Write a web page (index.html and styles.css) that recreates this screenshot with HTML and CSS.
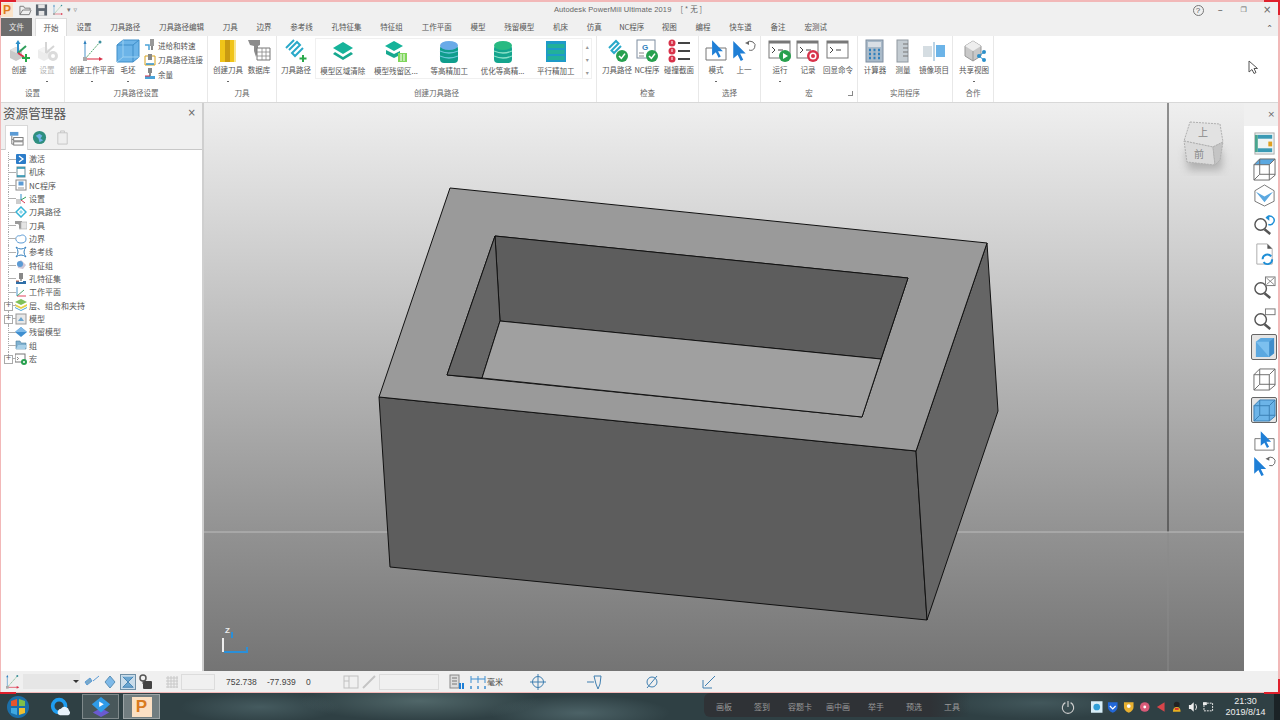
FILE: index.html
```html
<!DOCTYPE html>
<html lang="zh">
<head>
<meta charset="utf-8">
<title>Autodesk PowerMill Ultimate 2019</title>
<link rel="stylesheet" href="styles.css">
</head>
<body>
<svg class="defs" xmlns="http://www.w3.org/2000/svg">
  <symbol id="cube-s" viewBox="0 0 24 24"><path d="M3 11l6-3 6 3v8l-6 3-6-3z" fill="#c9c9c9"/><path d="M3 11l6 3 6-3-6-3z" fill="#e2e2e2"/></symbol>
  <symbol id="create" viewBox="0 0 24 24"><use href="#cube-s"/><path d="M11 14V3" stroke="#2c8fc9" stroke-width="2"/><path d="M11 1l-2.500 4h5z" fill="#2c8fc9"/><path d="M11 14l8-7" stroke="#2e9e5b" stroke-width="2"/><path d="M11 14l6 4" stroke="#d8324a" stroke-width="2"/><path d="M19 15v8M15 19h8" stroke="#29a84a" stroke-width="2"/></symbol>
  <symbol id="setup" viewBox="0 0 24 24"><g opacity=".35"><use href="#cube-s"/><path d="M11 14V3M11 14l8-7" stroke="#888" stroke-width="2"/><circle cx="18" cy="17" r="5" fill="#999"/><circle cx="18" cy="17" r="2" fill="#fff"/></g></symbol>
  <symbol id="wplane" viewBox="0 0 24 24"><path d="M5 3v17" stroke="#4b93c9" stroke-width="1"/><path d="M5 1L3.500 5h3z" fill="#2f80bd"/><path d="M5 20L20 3" stroke="#4da56b" stroke-width="1" stroke-dasharray="2 1"/><circle cx="20" cy="3" r="1.500" fill="#3d8f9c"/><path d="M5 20h15" stroke="#e0475c" stroke-width="1.200"/><path d="M23 20l-4-2v4z" fill="#d8324a"/><rect x="3" y="18" width="4" height="4" fill="#aaa"/></symbol>
  <symbol id="blank" viewBox="0 0 24 24"><path d="M1 6l6-5h16v17l-6 5H1z" fill="#6cb4e8" stroke="#3e8ec9"/><path d="M1 6h16v17M17 6l6-5" fill="none" stroke="#3e8ec9"/><path d="M7 1v17h16M7 18l-6 5" fill="none" stroke="#9ad0f2"/></symbol>
  <symbol id="feed" viewBox="0 0 12 12"><rect x="6" y="0" width="4" height="7" fill="#999"/><path d="M8 7v4" stroke="#888" stroke-width="2"/><path d="M1 6h4v5" stroke="#4ba3d8" stroke-width="1.500" fill="none"/></symbol>
  <symbol id="link" viewBox="0 0 12 12"><path d="M1 2h10v9H1z" fill="none" stroke="#d6a21e"/><rect x="4" y="0" width="4" height="6" fill="#888"/><path d="M2 10h8" stroke="#2c8fc9" stroke-width="1.500"/></symbol>
  <symbol id="stock" viewBox="0 0 12 12"><rect x="4" y="0" width="4" height="5" fill="#888"/><path d="M6 5v3" stroke="#666" stroke-width="1.500"/><path d="M1 8h10v3H1z" fill="#4ba3d8"/><path d="M1 8h5" stroke="#d8324a"/></symbol>
  <symbol id="tool" viewBox="0 0 24 24"><rect x="4" y="1" width="16" height="22" fill="#f0c419"/><rect x="9" y="1" width="5" height="22" fill="#c99a12"/><rect x="18" y="1" width="2" height="22" fill="#f9e58a"/></symbol>
  <symbol id="database" viewBox="0 0 24 24"><path d="M1 1h12v5l-2 1v5l-2 6-2-6V7L3 6z" fill="#8c8c8c"/><path d="M10 9h13v12H10z" fill="#fff" stroke="#777"/><path d="M10 13h13M10 17h13M15 9v12M19 9v12" stroke="#888" stroke-width=".8"/></symbol>
  <symbol id="path" viewBox="0 0 24 24"><path d="M5 11l8-8 3 3-8 8 3 3 8-8" fill="none" stroke="#29a9c9" stroke-width="2"/><path d="M2 9l8-8" stroke="#29a9c9" stroke-width="2"/><path d="M19 16v7M15.500 19.500h7" stroke="#29a84a" stroke-width="2"/></symbol>
  <symbol id="layers" viewBox="0 0 24 24"><path d="M12 2l10 6-10 6L2 8z" fill="#16b39a"/><path d="M4 12l8 5 8-5 2 2-10 6-10-6z" fill="#16a88f"/></symbol>
  <symbol id="layers2" viewBox="0 0 24 24"><path d="M10 1l9 5-9 5-9-5z" fill="#16b39a"/><path d="M2 10l8 4 6-3v4l-6 3-8-4z" fill="#16a88f"/><rect x="14" y="13" width="9" height="9" fill="#7fd65c"/><path d="M17 14v7M20 14v7" stroke="#fff"/></symbol>
  <symbol id="cyl" viewBox="0 0 24 24"><rect x="3" y="5" width="18" height="18" rx="4" fill="#0f9d8c"/><path d="M3 11q9 4 18 0M3 16q9 4 18 0" stroke="#6bc7d8" fill="none" stroke-width="1.300"/><ellipse cx="12" cy="5.500" rx="9" ry="4.500" fill="#6aaae8"/></symbol>
  <symbol id="cyl2" viewBox="0 0 24 24"><rect x="3" y="5" width="18" height="18" rx="4" fill="#14a58e"/><path d="M3 11q9 4 18 0M3 16q9 4 18 0" stroke="#8be0c8" fill="none" stroke-width="1.300"/><ellipse cx="12" cy="5.500" rx="9" ry="4.500" fill="#28ba82"/></symbol>
  <symbol id="parallel" viewBox="0 0 24 24"><rect x="2" y="1" width="20" height="21" fill="#1e9ac9"/><rect x="3.500" y="4" width="17" height="4" fill="#22b09a"/><rect x="3.500" y="10" width="17" height="4" fill="#22b09a"/><rect x="3.500" y="16" width="17" height="4" fill="#22b09a"/></symbol>
  <symbol id="okbadge" viewBox="0 0 10 10"><circle cx="5" cy="5" r="5" fill="#27a04e"/><path d="M2.500 5l2 2 3-4" fill="none" stroke="#fff" stroke-width="1.300"/></symbol>
  <symbol id="pathok" viewBox="0 0 24 24"><path d="M4 9l7-7 2.500 2.500-7 7L9 14l7-7" fill="none" stroke="#29a9c9" stroke-width="2"/><use href="#okbadge" x="11" y="11" width="12" height="12"/></symbol>
  <symbol id="ncok" viewBox="0 0 24 24"><rect x="2" y="1" width="18" height="18" fill="#fff" stroke="#7f8ea0"/><text x="7" y="11" class="svg-g">G</text><path d="M4 14h5M4 17h5" stroke="#888"/><use href="#okbadge" x="11" y="11" width="12" height="12"/></symbol>
  <symbol id="collide" viewBox="0 0 24 24"><circle cx="5" cy="4" r="3.500" fill="#d8324a"/><circle cx="5" cy="12" r="3.500" fill="#d8324a"/><circle cx="5" cy="20" r="3.500" fill="#d8324a"/><path d="M5 2v3M5 10v3M5 18v3" stroke="#fff"/><path d="M11 4h12M11 12h12M11 20h12" stroke="#444" stroke-width="2"/></symbol>
  <symbol id="arrow" viewBox="0 0 12 16"><path d="M1 0v14l3.500-3 2.500 5 2-1-2.500-5H11z" fill="#1f7fd6"/></symbol>
  <symbol id="mode" viewBox="0 0 24 24"><path d="M2 9h6M15 9h7v12H2V9" fill="none" stroke="#777"/><use href="#arrow" x="7" y="1" width="13" height="18"/></symbol>
  <symbol id="prev" viewBox="0 0 24 24"><use href="#arrow" x="0" y="1" width="15" height="22"/><path d="M15 4a4.500 4.500 0 1 1 2 7" fill="none" stroke="#666"/><path d="M13 4l4-2v4z" fill="#666"/></symbol>
  <symbol id="win" viewBox="0 0 24 24"><rect x="1" y="2" width="21" height="17" fill="#fff" stroke="#777"/><rect x="1" y="2" width="21" height="2.500" fill="#777"/><path d="M4 8l3 3-3 3M10 11h5" fill="none" stroke="#444"/></symbol>
  <symbol id="run" viewBox="0 0 24 24"><use href="#win"/><circle cx="17" cy="17" r="6" fill="#27a04e"/><path d="M15 14v6l5-3z" fill="#fff"/></symbol>
  <symbol id="rec" viewBox="0 0 24 24"><use href="#win"/><circle cx="17" cy="17" r="6" fill="#d8324a"/><circle cx="17" cy="17" r="3.500" fill="#fff"/><circle cx="17" cy="17" r="2" fill="#d8324a"/></symbol>
  <symbol id="calc" viewBox="0 0 24 24"><rect x="3" y="1" width="17" height="22" fill="#a9bac9" stroke="#7f8ea0"/><rect x="5" y="3" width="13" height="5" fill="#d9dfe5"/><path d="M6 11h2M10.500 11h2M15 11h2M6 15h2M10.500 15h2M15 15h2M6 19h2M10.500 19h2M15 19h2" stroke="#2f80bd" stroke-width="2.500"/></symbol>
  <symbol id="measure" viewBox="0 0 24 24"><rect x="6" y="1" width="11" height="22" fill="#c4ccd2" stroke="#8f98a0"/><path d="M12 5h5M12 9h5M12 13h5M12 17h5" stroke="#777"/></symbol>
  <symbol id="mirror" viewBox="0 0 24 24"><rect x="1" y="7" width="9" height="11" fill="#d5dde2"/><rect x="14" y="6" width="9" height="12" fill="#6cb4e8"/><path d="M12 3v19" stroke="#79a9cc"/></symbol>
  <symbol id="share" viewBox="0 0 24 24"><path d="M3 7l8-5 8 5v10l-8 5-8-5z" fill="#c8c8c8" stroke="#999"/><path d="M3 7l8 5 8-5-8-5z" fill="#eee"/><path d="M11 12v10" stroke="#999"/><path d="M17 17l5-4M17 17l5 4" stroke="#2c8fc9"/><circle cx="17" cy="17" r="2" fill="#2c8fc9"/><circle cx="22" cy="13" r="2" fill="#2c8fc9"/><circle cx="22" cy="21" r="2" fill="#2c8fc9"/></symbol>
  <symbol id="box3d" viewBox="0 0 24 24"><path d="M1 7l6-6h16v17l-6 5H1z M1 7h16v16 M17 7l6-6 M7 1v16h16 M7 17l-6 6" fill="none" stroke="#6b6b6b"/></symbol>
  <symbol id="zoomg" viewBox="0 0 24 24"><circle cx="8" cy="13" r="6" fill="#fff" stroke="#555" stroke-width="1.500"/><path d="M12 18l6 5" stroke="#555" stroke-width="2.500"/></symbol>
</svg>

<div class="app">
  <div class="titlebar">
    <span class="logo">P</span>
    <svg class="qa" viewBox="0 0 14 12"><path d="M1 11V2h4l1 2h6v2H4l-3 5h10l2-5" fill="none" stroke="#777"/></svg>
    <svg class="qa" viewBox="0 0 14 12"><path d="M1 0h12v12H1z" fill="#5d6670"/><rect x="3.500" y="0" width="7" height="4" fill="#e6e6e6"/><rect x="4" y="7" width="6" height="5" fill="#e6e6e6"/></svg>
    <svg class="qa" viewBox="0 0 24 24"><use href="#wplane"/></svg>
    <span class="qa-drop">▾</span>
    <span class="qa-drop">▿</span>
    <span class="title">Autodesk PowerMill Ultimate 2019<span class="doc">[ * 无 ]</span></span>
    <div class="winbtns">
      <span class="help">?</span>
      <span class="wb">–</span>
      <span class="wb wb-r">❐</span>
      <span class="wb">×</span>
    </div>
  </div>

  <div class="tabs">
    <span class="tab file">文件</span>
    <span class="tab active">开始</span>
    <span class="tab">设置</span>
    <span class="tab">刀具路径</span>
    <span class="tab">刀具路径编辑</span>
    <span class="tab">刀具</span>
    <span class="tab">边界</span>
    <span class="tab">参考线</span>
    <span class="tab">孔特征集</span>
    <span class="tab">特征组</span>
    <span class="tab">工作平面</span>
    <span class="tab">模型</span>
    <span class="tab">残留模型</span>
    <span class="tab">机床</span>
    <span class="tab">仿真</span>
    <span class="tab nc">NC程序</span>
    <span class="tab">视图</span>
    <span class="tab">编程</span>
    <span class="tab">快车道</span>
    <span class="tab">备注</span>
    <span class="tab">宏测试</span>
    <span class="collapse">⌃</span>
  </div>

  <div class="ribbon">
    <section class="group g1">
      <div class="items">
        <div class="item w28"><svg class="ic"><use href="#create"/></svg><span>创建</span></div>
        <div class="item w28 off"><svg class="ic"><use href="#setup"/></svg><span>设置</span><i class="more"></i></div>
      </div>
      <h4>设置</h4>
    </section>
    <section class="group g2">
      <div class="items">
        <div class="item w44"><svg class="ic"><use href="#wplane"/></svg><span>创建工作平面</span><i class="more"></i></div>
        <div class="item w28"><svg class="ic"><use href="#blank"/></svg><span>毛坯</span><i class="more"></i></div>
        <div class="minilist">
          <div class="mini"><svg><use href="#feed"/></svg>进给和转速</div>
          <div class="mini"><svg><use href="#link"/></svg>刀具路径连接</div>
          <div class="mini"><svg><use href="#stock"/></svg>余量</div>
        </div>
      </div>
      <h4>刀具路径设置</h4>
    </section>
    <section class="group g3">
      <div class="items">
        <div class="item w32"><svg class="ic"><use href="#tool"/></svg><span>创建刀具</span><i class="more"></i></div>
        <div class="item w28"><svg class="ic"><use href="#database"/></svg><span>数据库</span></div>
      </div>
      <h4>刀具</h4>
    </section>
    <section class="group g4">
      <div class="items">
        <div class="item w34"><svg class="ic"><use href="#path"/></svg><span>刀具路径</span></div>
        <div class="gallery">
          <div class="item wg"><svg class="ic"><use href="#layers"/></svg><span>模型区域清除</span></div>
          <div class="item wg"><svg class="ic"><use href="#layers2"/></svg><span>模型残留区...</span></div>
          <div class="item wg"><svg class="ic"><use href="#cyl"/></svg><span>等高精加工</span></div>
          <div class="item wg"><svg class="ic"><use href="#cyl2"/></svg><span>优化等高精...</span></div>
          <div class="item wg"><svg class="ic"><use href="#parallel"/></svg><span>平行精加工</span></div>
          <div class="gscroll"><b>▴</b><b>▾</b><b>▾</b></div>
        </div>
      </div>
      <h4>创建刀具路径</h4>
    </section>
    <section class="group g5">
      <div class="items">
        <div class="item w30"><svg class="ic"><use href="#pathok"/></svg><span>刀具路径</span></div>
        <div class="item w30"><svg class="ic"><use href="#ncok"/></svg><span>NC程序</span></div>
        <div class="item w34"><svg class="ic"><use href="#collide"/></svg><span>碰撞截面</span></div>
      </div>
      <h4>检查</h4>
    </section>
    <section class="group g6">
      <div class="items">
        <div class="item w30"><svg class="ic"><use href="#mode"/></svg><span>模式</span><i class="more"></i></div>
        <div class="item w26"><svg class="ic"><use href="#prev"/></svg><span>上一</span></div>
      </div>
      <h4>选择</h4>
    </section>
    <section class="group g7">
      <div class="items">
        <div class="item w30"><svg class="ic"><use href="#run"/></svg><span>运行</span><i class="more"></i></div>
        <div class="item w26"><svg class="ic"><use href="#rec"/></svg><span>记录</span></div>
        <div class="item w34"><svg class="ic"><use href="#win"/></svg><span>回显命令</span></div>
      </div>
      <h4>宏<i class="launcher"></i></h4>
    </section>
    <section class="group g8">
      <div class="items">
        <div class="item w28"><svg class="ic"><use href="#calc"/></svg><span>计算器</span></div>
        <div class="item w28"><svg class="ic"><use href="#measure"/></svg><span>测量</span></div>
        <div class="item w34"><svg class="ic"><use href="#mirror"/></svg><span>镜像项目</span></div>
      </div>
      <h4>实用程序</h4>
    </section>
    <section class="group g9">
      <div class="items">
        <div class="item w36"><svg class="ic"><use href="#share"/></svg><span>共享视图</span><i class="more"></i></div>
      </div>
      <h4>合作</h4>
    </section>
    <svg class="cursor" viewBox="0 0 10 14"><path d="M1 1v11l3-2.500 2 4 2-1-2-4h3.500z" fill="#fff" stroke="#555"/></svg>
  </div>

  <div class="main">
    <aside class="explorer">
      <div class="ex-head"><span>资源管理器</span><i>×</i></div>
      <div class="ex-tabs">
        <span class="ex-tab active"><svg viewBox="0 0 16 16"><rect x="1" y="1" width="9" height="4" fill="#5b9bd5"/><path d="M3 5v9h2M3 9h2" fill="none" stroke="#777"/><rect x="5" y="7" width="10" height="3.500" fill="#fff" stroke="#777"/><rect x="5" y="11.500" width="10" height="3.500" fill="#fff" stroke="#777"/></svg></span>
        <span class="ex-tab"><svg viewBox="0 0 16 16"><circle cx="8" cy="8" r="7" fill="#2f8f7f"/><path d="M4 6l4-2 3 2-2 3 3 2-4 2-1-4z" fill="#6fb2e8"/></svg></span>
        <span class="ex-tab"><svg viewBox="0 0 16 16"><path d="M3 3h10v12H3zM6 3V1h4v2" fill="#eee" stroke="#c4c4c4"/></svg></span>
      </div>
      <ul class="tree">
        <li><svg viewBox="0 0 12 12"><rect x="1" y="1" width="10" height="10" rx="1" fill="#2b7cc9"/><path d="M4 3l4 3-4 3" fill="none" stroke="#fff" stroke-width="1.300"/></svg>激活</li>
        <li><svg viewBox="0 0 12 12"><rect x="2" y="1" width="8" height="10" fill="#fff" stroke="#6f8f9a"/><path d="M2 2h8M2 10h8" stroke="#1f8faf" stroke-width="1.500"/></svg>机床</li>
        <li><svg viewBox="0 0 12 12"><rect x="1" y="1" width="10" height="10" fill="#fff" stroke="#888"/><rect x="3.500" y="2.500" width="5" height="4" fill="#5b9bd5"/><path d="M3 9h6" stroke="#999"/></svg>NC程序</li>
        <li><svg viewBox="0 0 12 12"><rect x="1" y="6" width="5" height="5" fill="#ccc"/><path d="M6 7V1" stroke="#2c8fc9"/><path d="M6 7l5-3" stroke="#2e9e5b"/><path d="M6 7l4 3" stroke="#d8324a"/></svg>设置</li>
        <li><svg viewBox="0 0 12 12"><path d="M6 1l5 5-5 5-5-5z" fill="none" stroke="#36b4d6" stroke-width="1.500"/><path d="M6 4l2 2-2 2-2-2z" fill="#8ed8ec"/></svg>刀具路径</li>
        <li><svg viewBox="0 0 12 12"><path d="M0 2h7v3l-1 1v3l-1 2-1-2V6L3 5H0z" fill="#9a9a9a"/><rect x="6" y="3" width="6" height="7" fill="#e4e4e4" stroke="#aaa" stroke-width=".6"/></svg>刀具</li>
        <li><svg viewBox="0 0 12 12"><path d="M1 7c-1-3 2-5 4-4 2-2 6-1 6 3 0 3-2 4-5 4s-4-1-5-3z" fill="#fff" stroke="#5b9bd5"/></svg>边界</li>
        <li><svg viewBox="0 0 12 12"><path d="M1 1q5 4 10 0-4 5 0 10-5-4-10 0 4-5 0-10z" fill="none" stroke="#3a83bf"/></svg>参考线</li>
        <li><svg viewBox="0 0 12 12"><path d="M2 4l4-3 5 5-3 4-5-1z" fill="#d0c6d6"/><circle cx="5" cy="5" r="3" fill="#5b9bd5"/></svg>特征组</li>
        <li><svg viewBox="0 0 12 12"><rect x="4" y="0" width="4" height="6" fill="#888"/><path d="M6 6v2" stroke="#555"/><path d="M1 8h3v1h4V8h3v3H1z" fill="#2f6fa8"/><path d="M1 8h3" stroke="#c64"/></svg>孔特征集</li>
        <li><svg viewBox="0 0 12 12"><path d="M2 1v9" stroke="#4b93c9"/><path d="M2 10h9" stroke="#e0475c"/><path d="M2 10l7-6" stroke="#4da56b"/></svg>工作平面</li>
        <li class="exp"><svg viewBox="0 0 12 12"><path d="M6 0l6 3-6 3-6-3z" fill="#7fc05a"/><path d="M0 5l6 3 6-3v2L6 10 0 7z" fill="#e6d04a"/><path d="M0 8l6 3 6-3v1l-6 3-6-3z" fill="#4aa8d8"/></svg>层、组合和夹持</li>
        <li class="exp"><svg viewBox="0 0 12 12"><rect x="1" y="1" width="10" height="10" fill="#e8e8e8" stroke="#999"/><path d="M3 8l3-4 3 4z" fill="#6aa5d0"/></svg>模型</li>
        <li><svg viewBox="0 0 12 12"><path d="M6 1l6 5-6 5-6-5z" fill="#3f8fd0"/><path d="M6 1l6 5H0z" fill="#7db9e8"/></svg>残留模型</li>
        <li><svg viewBox="0 0 12 12"><path d="M1 2h4l1 2h5v6H1z" fill="#7fb0cf" stroke="#4a7f9f" stroke-width=".6"/><path d="M1 10l2-4h9l-2 4z" fill="#a8d0e8"/></svg>组</li>
        <li class="exp"><svg viewBox="0 0 12 12"><rect x="0" y="1" width="10" height="8" fill="#fff" stroke="#777"/><path d="M2 4l1.500 1.500L2 7" fill="none" stroke="#555" stroke-width=".7"/><circle cx="9" cy="9" r="3" fill="#27a04e"/><circle cx="9" cy="9" r="1" fill="#fff"/></svg>宏</li>
      </ul>
    </aside>

    <div class="viewport">
      <svg class="scene" viewBox="204 103 1040 568" xmlns="http://www.w3.org/2000/svg">
        <defs>
          <filter id="soft" x="-30%" y="-30%" width="160%" height="160%"><feGaussianBlur stdDeviation="4"/></filter>
        </defs>
        <path d="M1168 103v429" stroke="#2e2e2e" stroke-width="1"/>
        <path d="M1168 532v139" stroke="#8a8a8a" stroke-width="1"/>
        <path d="M204 532h1040" stroke="#bdbdbd" stroke-width="1"/>
        <g stroke="#111" stroke-width="1" stroke-linejoin="round">
          <polygon points="379,397 916,451 927,620 390,567" fill="#5d5d5d"/>
          <polygon points="916,451 987,243 998,411 927,620" fill="#656565"/>
          <path d="M450,188 L987,243 L916,451 L379,397 Z M495,236 L447,375 L862,417 L908,278 Z" fill="#9a9a9a" fill-rule="evenodd"/>
          <polygon points="495,236 908,278 881,359 500,321" fill="#5d5d5d"/>
          <polygon points="495,236 500,321 482,378 447,375" fill="#666"/>
          <polygon points="500,321 881,359 862,417 482,378" fill="#a0a0a0"/>
        </g>
        <g class="triad">
          <path d="M232 632v6" stroke="#2a8fd8" stroke-width="2"/>
          <path d="M223 652v-14" stroke="#eee" stroke-width="2"/>
          <path d="M224 652h23v-5" stroke="#2a8fd8" stroke-width="2" fill="none"/>
          <text x="225" y="633" class="axis">Z</text>
        </g>
        <g class="cube">
          <polygon points="1186,150 1222,150 1222,170 1188,170" fill="#8f8f8f" opacity=".6" filter="url(#soft)"/>
          <polygon points="1190,122 1220,124 1223,142 1213,147 1184,141" fill="#e2e2e2" stroke="#b0b0b0" stroke-dasharray="2 1"/>
          <polygon points="1184,141 1213,147 1215,165 1187,162" fill="#dadada" stroke="#b0b0b0" stroke-dasharray="2 1"/>
          <polygon points="1213,147 1223,142 1220,160 1215,165" fill="#c4c4c4" stroke="#b0b0b0" stroke-dasharray="2 1"/>
          <text x="1203" y="136" class="cube-t">上</text>
          <text x="1199" y="158" class="cube-t">前</text>
        </g>
      </svg>
    </div>

    <aside class="viewbar">
      <div class="vb-head">×</div>
      <div class="vb-list">
        <span class="vb h26"><svg viewBox="0 0 24 24"><rect x="2" y="1" width="20" height="22" fill="#eef4f4" stroke="#aaa"/><rect x="5" y="3" width="15" height="4" fill="#3a9ab5"/><rect x="5" y="17" width="15" height="4" fill="#3a9ab5"/><rect x="2" y="3" width="3" height="18" fill="#4aa58f"/><rect x="16" y="10" width="4" height="5" fill="#e0a020"/></svg></span>
        <span class="vb h26"><svg viewBox="0 0 24 24"><path d="M1 7l6-6h16L17 7z" fill="#5ba8e0"/><use href="#box3d"/></svg></span>
        <span class="vb h27"><svg viewBox="0 0 24 24"><path d="M12 1l10 6v11l-10 5-10-5V7z" fill="#fff" stroke="#777"/><path d="M3 8l9 5 9-5-9 11z" fill="#5ba8e0"/></svg></span>
        <span class="vb h29"><svg viewBox="0 0 24 24"><use href="#zoomg"/><path d="M14 6a4.500 4.500 0 1 1 2 7" fill="none" stroke="#1f8fd6" stroke-width="1.500"/><path d="M13 6l4-3v6z" fill="#1f8fd6"/></svg></span>
        <span class="vb h32"><svg viewBox="0 0 24 24"><path d="M4 1h11l5 5v16H4z" fill="#fff" stroke="#aaa"/><path d="M15 1l5 5h-5z" fill="#555"/><path d="M10 17a5 5 0 0 1 9-3M20 17a5 5 0 0 1-9 3" fill="none" stroke="#1f8fd6" stroke-width="2"/></svg></span>
        <span class="vb h34"><svg viewBox="0 0 24 24"><use href="#zoomg"/><rect x="13" y="1" width="10" height="9" fill="#fff" stroke="#777"/><path d="M14 2l8 7M22 2l-8 7" stroke="#888"/></svg></span>
        <span class="vb h28"><svg viewBox="0 0 24 24"><use href="#zoomg"/><rect x="13" y="2" width="10" height="6" fill="#fff" stroke="#777"/></svg></span>
        <span class="vb on on-a"><svg viewBox="0 0 24 24"><path d="M3 6l5-4h14v16l-5 4H3z" fill="#5ba8e0"/><path d="M3 6h14v16z" fill="#7cc0ef"/><path d="M17 6l5-4v16l-5 4z" fill="#3f8ecb"/></svg></span>
        <span class="vb h34"><svg viewBox="0 0 24 24"><use href="#box3d"/></svg></span>
        <span class="vb on on-b"><svg viewBox="0 0 24 24"><path d="M1 7l6-6h16v17l-6 5H1z" fill="#6cb4e8"/><path d="M1 7l6-6h16v17l-6 5H1z M1 7h16v16 M17 7l6-6 M7 1v16h16 M7 17l-6 6" fill="none" stroke="#3a7fb5"/></svg></span>
        <span class="vb h34"><svg viewBox="0 0 24 24"><use href="#mode"/></svg></span>
        <span class="vb h16"><svg viewBox="0 0 24 24"><use href="#prev"/></svg></span>
      </div>
    </aside>
  </div>

  <footer class="status">
    <svg class="st" viewBox="0 0 24 24"><use href="#wplane"/></svg>
    <span class="combo"><i></i></span>
    <svg class="st" viewBox="0 0 16 16"><path d="M1 8l5-4 2 3-5 4zM15 2L9 7" fill="#7aa9c9" stroke="#5b9bd5"/></svg>
    <svg class="st" viewBox="0 0 16 16"><path d="M8 2l5 6-5 6-5-6z" fill="#7db9e8" stroke="#5b8fb5"/></svg>
    <span class="st-on"><svg viewBox="0 0 16 16"><path d="M2 2l6 6 6-6M8 8l-6 6h12z" fill="#6aa5d0" stroke="#3f7fb0"/></svg></span>
    <svg class="st" viewBox="0 0 16 16"><rect x="5" y="7" width="9" height="8" rx="1" fill="#444"/><circle cx="5" cy="4" r="3" fill="none" stroke="#555" stroke-width="1.500"/><path d="M5 7v3" stroke="#555"/></svg>
    <svg class="st grid" viewBox="0 0 12 12"><path d="M0 2h12M0 5h12M0 8h12M0 11h12M2 0v12M5 0v12M8 0v12M11 0v12" stroke="#c8c8c8"/></svg>
    <span class="field f1"></span>
    <span class="num n1">752.738</span>
    <span class="num n2">-77.939</span>
    <span class="num n3">0</span>
    <svg class="st dim d1" viewBox="0 0 16 16"><rect x="1" y="2" width="14" height="12" fill="none" stroke="#c0c0c0"/><path d="M6 2v12M1 7h5" stroke="#c0c0c0"/></svg>
    <svg class="st dim" viewBox="0 0 16 16"><path d="M2 14L14 2" stroke="#c4c4c4" stroke-width="2"/></svg>
    <span class="field f2"></span>
    <svg class="st s1" viewBox="0 0 16 16"><rect x="2" y="1" width="9" height="13" fill="#ddd" stroke="#888"/><path d="M4 4h5M4 7h5M4 10h5" stroke="#777"/><path d="M12 9v6M15 9v6" stroke="#1f7fd6" stroke-width="2"/></svg>
    <svg class="st s2" viewBox="0 0 16 16"><path d="M1 2v7M8 2v7M15 2v7M1 5h14" stroke="#3f8fd0" fill="none"/><path d="M1 12v3M8 12v3M15 12v3" stroke="#3f8fd0" stroke-width="1.500"/></svg>
    <span class="unit">毫米</span>
    <svg class="st s3" viewBox="0 0 16 16"><circle cx="8" cy="8" r="5.500" fill="none" stroke="#3f7fb0"/><path d="M8 0v16M0 8h16" stroke="#3f7fb0"/></svg>
    <svg class="st s4" viewBox="0 0 16 16"><path d="M7 2h7l-1 8-2 5-2-5zM0 8h7" fill="none" stroke="#3f7fb0"/></svg>
    <svg class="st s4" viewBox="0 0 16 16"><circle cx="8" cy="8" r="5" fill="none" stroke="#3f7fb0"/><path d="M3 14L13 2" stroke="#3f7fb0"/></svg>
    <svg class="st s4" viewBox="0 0 16 16"><path d="M14 2L4 12M2 6v8h9" fill="none" stroke="#3f7fb0"/></svg>
  </footer>
  <i class="corner tl"></i>
  <i class="corner tr"></i>
  <i class="corner bl"></i>
  <i class="corner br"></i>
</div>

<nav class="taskbar">
  <span class="orb"><svg viewBox="0 0 24 24"><circle cx="12" cy="12" r="11" fill="#1c6fa8"/><path d="M5 6l6-2v7H5z" fill="#e8552d"/><path d="M13 4l6 2v5h-6z" fill="#7fc04a"/><path d="M5 13h6v7l-6-2z" fill="#3fa8e0"/><path d="M13 13h6v5l-6 2z" fill="#f0c030"/></svg></span>
  <span class="tk q"><svg viewBox="0 0 24 24"><circle cx="11" cy="11" r="7" fill="none" stroke="#1f9df0" stroke-width="4"/><path d="M10 20a4 4 0 0 1 3-6 5 5 0 0 1 9 2 3 3 0 0 1-1 5H12z" fill="#e8f2fa"/></svg></span>
  <span class="tk app"><svg viewBox="0 0 24 24"><path d="M12 13l9 5-9 5-9-5z" fill="#6a5ad0"/><path d="M12 1l10 8-10 9L2 9z" fill="#2f9be8"/><path d="M10 6l5 3-5 3z" fill="#fff"/></svg></span>
  <span class="tk app light"><span class="pm">P</span></span>
  <div class="dock">
    <span>画板</span><span>签到</span><span>容题卡</span><span>画中画</span><span>举手</span><span>预选</span><span>工具</span>
  </div>
  <svg class="power" viewBox="0 0 16 16"><path d="M5 3a6.500 6.500 0 1 0 6 0M8 1v7" fill="none" stroke="#cfcfcf" stroke-width="1.300"/></svg>
  <div class="tray">
    <svg viewBox="0 0 12 12"><rect width="12" height="12" fill="#d8eef8"/><circle cx="6" cy="6" r="3.500" fill="#2f9fd8"/></svg>
    <svg viewBox="0 0 12 12"><path d="M1 1h10v5q0 4-5 6-5-2-5-6z" fill="#2368d8"/><path d="M3 5l3 3 3-3" fill="none" stroke="#fff" stroke-width="1.300"/></svg>
    <svg viewBox="0 0 12 12"><path d="M1 1h10v5q0 4-5 6-5-2-5-6z" fill="#e8b030"/><circle cx="6" cy="5" r="2" fill="#fff"/></svg>
    <svg viewBox="0 0 12 12"><circle cx="6" cy="6" r="5" fill="#d85a78"/><circle cx="6" cy="6" r="1.500" fill="#fff"/></svg>
    <svg viewBox="0 0 12 12"><path d="M2 6l8-5v10z" fill="#d8454a"/></svg>
    <svg viewBox="0 0 12 12"><circle cx="6" cy="3.500" r="3" fill="#222"/><path d="M2 11q0-5 4-5t4 5z" fill="#e8b020"/><path d="M4 7h4v2H4z" fill="#d83030"/></svg>
    <svg viewBox="0 0 12 12"><path d="M2 4h2l3-3v10L4 8H2z" fill="#eee"/><path d="M9 3q2 3 0 6" fill="none" stroke="#eee"/></svg>
    <svg viewBox="0 0 12 12"><rect x="1" y="2" width="9" height="8" fill="none" stroke="#eee" stroke-dasharray="2 1"/><rect x="0" y="1" width="4" height="3" fill="#eee"/></svg>
  </div>
  <div class="clock"><span>21:30</span><span>2019/8/14</span></div>
  <span class="showdesk"></span>
</nav>
</body>
</html>
```

FILE: styles.css
```css
* { box-sizing: border-box; }
html, body { margin: 0; padding: 0; }
body {
  width: 1280px;
  height: 720px;
  overflow: hidden;
  background: #2a383c;
  font-family: "Noto Sans CJK SC", "Noto Sans", sans-serif;
  color: #555;
}
.defs { display: none; }

.app {
  position: relative;
  width: 1280px;
  height: 693px;
  display: flex;
  flex-direction: column;
  background: #f0f0f0;
  border: 1px solid #f2b8b8;
  border-width: 2px 2px 1px 1px;
}
.corner { position: absolute; width: 16px; height: 15px; border: 0 solid #e0202c; }
.corner.tl { left: -1px; top: -2px; border-width: 2px 0 0 1px; }
.corner.tr { right: -2px; top: -2px; border-width: 2px 2px 0 0; }
.corner.bl { left: -1px; bottom: -2px; height: 2px; border-width: 0 0 2px 0; }
.corner.br { right: -2px; bottom: -2px; border-width: 0 2px 2px 0; }

.titlebar {
  height: 16px;
  flex: none;
  display: flex;
  align-items: center;
  position: relative;
}
.logo {
  width: 12px;
  height: 14px;
  background: #fbe3c8;
  color: #e07b1e;
  font: 700 12px/14px "Liberation Sans", sans-serif;
  text-align: center;
}
.qa { width: 13px; height: 12px; margin-left: 3px; }
.qa:first-of-type { margin-left: 6px; }
.qa-drop { font: 7px/10px "DejaVu Sans", sans-serif; color: #777; margin-left: 3px; }
.title {
  position: absolute;
  left: 553px;
  top: 1px;
  font: 7.5px/12px "Liberation Sans", "Noto Sans CJK SC", sans-serif;
  letter-spacing: .1px;
  color: #666;
  white-space: nowrap;
}
.doc { margin-left: 9px; font-family: "Noto Sans CJK SC", sans-serif; }
.winbtns { margin-left: auto; margin-right: -1px; display: flex; align-items: center; }
.help {
  width: 11px;
  height: 11px;
  border: 1px solid #777;
  border-radius: 50%;
  font: 8px/9px "Liberation Sans", sans-serif;
  text-align: center;
  margin-right: 5px;
}
.wb { width: 23.5px; text-align: center; font: 10px/12px "DejaVu Sans", sans-serif; color: #666; }
.wb-r { font-size: 7px; }

.tabs {
  height: 18px;
  flex: none;
  display: flex;
  align-items: stretch;
  font-size: 7.5px;
  line-height: 18px;
  position: relative;
}
.tab { padding: 0 9.4px; white-space: nowrap; color: #555; }
.tab.nc { padding: 0 8px; }
.tab.file { width: 31px; padding: 0; text-align: center; background: #6d6d6d; color: #e8e8e8; margin-right: 3px; }
.tab.active { width: 32px; padding: 0; text-align: center; background: #fff; border: 1px solid #dcdcdc; border-bottom: 0; }
.collapse { margin-left: auto; margin-right: 5px; font: 8px/22px "DejaVu Sans", sans-serif; color: #555; }

.ribbon {
  height: 67px;
  flex: none;
  display: flex;
  background: #fff;
  border-bottom: 1px solid #d8d8d8;
  position: relative;
}
.group {
  flex: none;
  height: 66px;
  display: flex;
  flex-direction: column;
  border-right: 1px solid #e8e8e8;
}
.items { height: 50px; display: flex; padding-top: 3px; }
.group h4 {
  margin: 0;
  height: 16px;
  font-weight: 400;
  font-size: 7.5px;
  line-height: 14px;
  text-align: center;
  color: #666;
  position: relative;
}
.g1 { width: 64px; } .g1 .items { padding-left: 4px; }
.g2 { width: 143px; } .g2 .items { padding-left: 5px; }
.g3 { width: 69px; } .g3 .items { padding-left: 4px; gap: 1px; }
.g4 { width: 320px; } .g4 .items { padding-left: 2px; gap: 2px; }
.g5 { width: 102px; } .g5 .items { padding-left: 5px; }
.g6 { width: 62px; } .g6 .items { padding-left: 2px; }
.g7 { width: 97px; } .g7 .items { padding-left: 4px; }
.g8 { width: 95px; } .g8 .items { padding-left: 3px; }
.g9 { width: 41px; } .g9 .items { padding-left: 3px; }

.item {
  flex: none;
  display: flex;
  flex-direction: column;
  align-items: center;
  font-size: 7.5px;
  line-height: 12px;
  white-space: nowrap;
  color: #555;
}
.item .ic { width: 24px; height: 24px; margin-bottom: 1px; flex: none; }
.item.off { color: #b4b4b4; }
.w26 { width: 26px; } .w28 { width: 28px; } .w30 { width: 30px; }
.w32 { width: 32px; } .w34 { width: 34px; } .w36 { width: 36px; }
.w44 { width: 44px; } .wg { width: 53.3px; }
.more { width: 2px; height: 1px; background: #666; margin-top: 5px; }

.minilist { margin: -1px 0 0 2px; display: flex; flex-direction: column; }
.mini {
  height: 14.5px;
  display: flex;
  align-items: center;
  gap: 2px;
  font-size: 7.5px;
  white-space: nowrap;
  color: #555;
}
.mini svg { width: 12px; height: 12px; flex: none; }

.gallery {
  display: flex;
  height: 41px;
  width: 277px;
  border: 1px solid #f0f0f0;
  margin-top: -1px;
  padding-top: 1px;
}
.gscroll {
  width: 9px;
  display: flex;
  flex-direction: column;
  border-left: 1px solid #eee;
  font-size: 6px;
  color: #999;
  text-align: center;
}
.gscroll b { height: 13px; font: 6px/13px "DejaVu Sans", sans-serif; }

.launcher {
  position: absolute;
  right: 4px;
  top: 5px;
  width: 5px;
  height: 5px;
  border-right: 1px solid #888;
  border-bottom: 1px solid #888;
}
.cursor { position: absolute; left: 1247px; top: 24px; width: 10px; height: 14px; }

.main { flex: 1; min-height: 0; display: flex; }
.explorer {
  width: 203px;
  flex: none;
  background: #fff;
  display: flex;
  flex-direction: column;
  border-right: 2px solid #cfcfcf;
}
.ex-head {
  height: 22px;
  background: #f0f0f0;
  display: flex;
  align-items: center;
  justify-content: space-between;
  padding: 0 6px 3px 2px;
  font-size: 12.6px;
  color: #555;
  flex: none;
}
.ex-head i { font: 10px/12px "DejaVu Sans", sans-serif; color: #666; }
.ex-tabs {
  height: 25px;
  flex: none;
  background: #f0f0f0;
  border-bottom: 1px solid #c8c8c8;
  display: flex;
  padding-left: 4px;
}
.ex-tab { width: 23px; height: 25px; display: flex; align-items: center; justify-content: center; }
.ex-tab.active { background: #fff; border: 1px solid #d8d8d8; border-bottom: 0; }
.ex-tab svg { width: 15px; height: 15px; }
.tree {
  list-style: none;
  margin: 0;
  padding: 2px 0 0 14px;
}
.tree li {
  position: relative;
  height: 13.33px;
  display: flex;
  align-items: center;
  gap: 2px;
  font-size: 8px;
  line-height: 13px;
  color: #555;
  white-space: nowrap;
}
.tree li svg { width: 12px; height: 12px; flex: none; }
.tree li::before {
  content: "";
  position: absolute;
  left: -7px;
  top: 0;
  bottom: 0;
  width: 7px;
  border-left: 1px dotted #aaa;
  background: linear-gradient(#b0b0b0, #b0b0b0) left 6.5px / 7px 1px no-repeat;
}
.tree li:last-child::before { bottom: 6px; }
.tree li.exp::after {
  content: "+";
  position: absolute;
  left: -11px;
  top: 3px;
  width: 7px;
  height: 7px;
  border: 1px solid #aaa;
  background: #fff;
  font: 7px/5px "DejaVu Sans", sans-serif;
  text-align: center;
  color: #555;
}

.viewport {
  flex: 1;
  min-width: 0;
  background: linear-gradient(#efefef, #747474);
}
.scene { display: block; width: 100%; height: 100%; }
.axis { font: 700 8px "Liberation Sans", sans-serif; fill: #eee; }
.cube-t { font: 10px "Noto Sans CJK SC", sans-serif; fill: #888; text-anchor: middle; }
.svg-g { font: 700 8px "Liberation Sans", sans-serif; fill: #2f80bd; }

.viewbar {
  width: 34px;
  flex: none;
  background: #fff;
  display: flex;
  flex-direction: column;
}
.vb-head {
  height: 23px;
  flex: none;
  background: #f0f0f0;
  font: 9px/23px "DejaVu Sans", sans-serif;
  text-align: right;
  padding-right: 3px;
  color: #666;
}
.vb-list { display: flex; flex-direction: column; padding: 4px 0 0 7px; }
.vb {
  width: 26px;
  flex: none;
  display: flex;
  align-items: center;
  justify-content: center;
}
.vb svg { width: 23px; height: 23px; flex: none; }
.h16 { height: 16px; } .h26 { height: 26px; } .h27 { height: 27px; }
.h28 { height: 28px; } .h29 { height: 29px; } .h32 { height: 32px; }
.h34 { height: 34px; }
.vb.on { height: 26px; background: #e4e4e4; border: 1px solid #666; border-radius: 2px; }
.vb.on-a { margin: 2px 0; }
.vb.on-b { margin: 1px 0; }

.status {
  height: 21px;
  flex: none;
  display: flex;
  align-items: center;
  padding-left: 1px;
  font-size: 8.5px;
}
.st { width: 16px; height: 16px; flex: none; margin-left: 2px; }
.combo {
  width: 57px;
  height: 15px;
  background: #e6e6e6;
  margin: 0 2px 0 3px;
  position: relative;
  flex: none;
}
.combo i {
  position: absolute;
  right: 1px;
  top: 6px;
  border: 3px solid transparent;
  border-top-color: #333;
}
.st-on { width: 16px; height: 16px; margin-left: 2px; background: #c9dcea; border: 1px solid #6f8fa5; flex: none; display: flex; }
.st-on svg { width: 100%; height: 100%; }
.st.grid { width: 12px; height: 12px; margin-left: 12px; }
.field { height: 16px; border: 1px solid #dcdcdc; flex: none; }
.field.f1 { width: 34px; margin-left: 3px; }
.field.f2 { width: 60px; margin-left: 2px; }
.num { font: 8.5px/12px "Liberation Sans", sans-serif; color: #444; flex: none; }
.n1 { margin-left: 11px; width: 41px; }
.n2 { width: 39px; }
.n3 { width: 37px; }
.st.d1 { margin-left: 0; }
.s1 { margin-left: 9px; }
.s2 { margin-left: 6px; }
.unit { width: 18px; margin-left: 1px; font-size: 8px; color: #444; flex: none; }
.s3 { margin-left: 25px; }
.s4 { margin-left: 41px; }

.taskbar {
  height: 27px;
  width: 1280px;
  display: flex;
  align-items: center;
  color: #ddd;
  background:
    radial-gradient(ellipse 120px 20px at 420px 8px, rgba(130,160,160,.4), transparent),
    radial-gradient(ellipse 90px 18px at 580px 20px, rgba(120,150,155,.4), transparent),
    radial-gradient(ellipse 80px 16px at 260px 14px, rgba(110,140,145,.35), transparent),
    radial-gradient(ellipse 100px 16px at 1040px 10px, rgba(110,140,145,.3), transparent),
    #2f4044;
}
.orb { width: 24px; height: 24px; margin-left: 6px; flex: none; }
.orb svg { width: 24px; height: 24px; display: block; }
.tk { height: 25px; display: flex; align-items: center; justify-content: center; flex: none; }
.tk svg { width: 22px; height: 22px; }
.tk.q { width: 24px; margin-left: 18px; }
.tk.app { width: 37px; margin-left: 4px; background: rgba(255,255,255,.12); border: 1px solid rgba(255,255,255,.3); }
.tk.q + .app { margin-left: 10px; }
.tk.light { background: rgba(255,255,255,.32); }
.pm {
  width: 20px;
  height: 20px;
  background: #fbe0c4;
  color: #d97a1e;
  font: 700 17px/20px "Liberation Sans", sans-serif;
  text-align: center;
}
.dock {
  margin-left: 544px;
  width: 266px;
  height: 24px;
  margin-top: -3px;
  display: flex;
  flex: none;
  padding-left: 1px;
  background: linear-gradient(90deg, #2f3236, #2f3236 85%, transparent);
  border-radius: 6px 0 0 6px;
  font-size: 8px;
  line-height: 27px;
  color: #9a9a9a;
}
.dock span { width: 38px; flex: none; text-align: center; }
.power { width: 14px; height: 14px; margin-left: 91px; flex: none; }
.tray { display: flex; gap: 4.500px; margin-left: 16px; flex: none; }
.tray svg { width: 11.500px; height: 12px; }
.clock {
  width: 52px;
  margin-left: 5px;
  display: flex;
  flex-direction: column;
  text-align: center;
  font: 9px/11px "Liberation Sans", sans-serif;
  color: #eee;
  flex: none;
}
.showdesk { width: 6px; height: 27px; margin-left: auto; background: #1b2326; flex: none; }
```
